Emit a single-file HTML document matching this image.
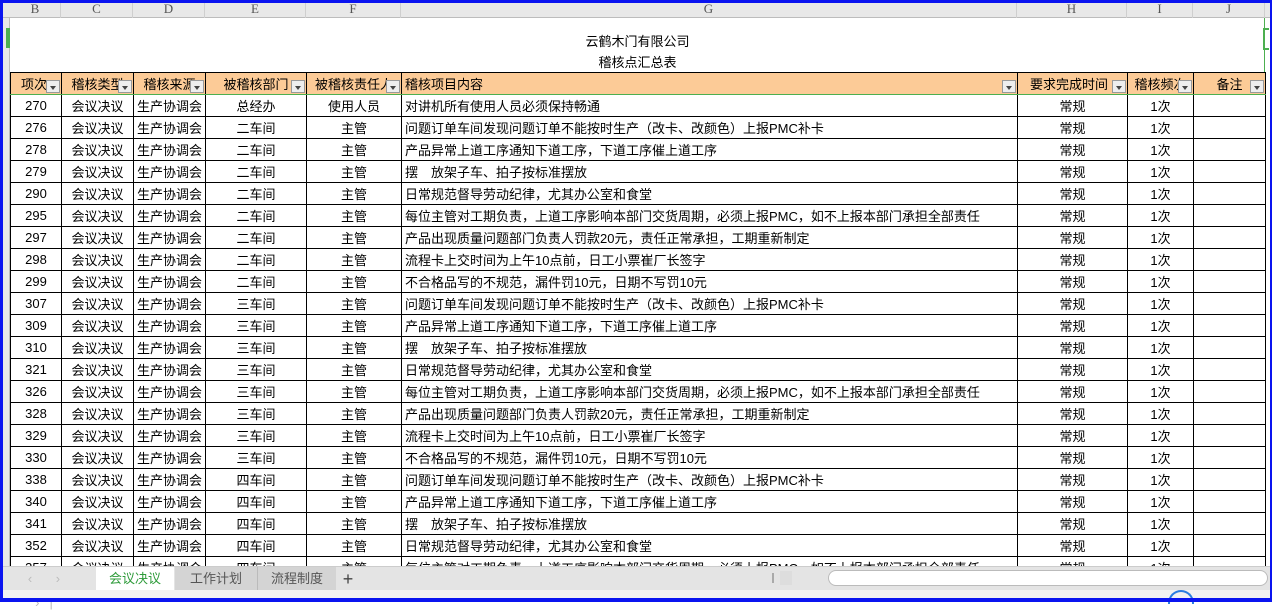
<!DOCTYPE html>
<html><head><meta charset="utf-8"><style>
*{margin:0;padding:0;box-sizing:border-box}
body{width:1272px;height:602px;overflow:hidden;background:#fff;font-family:"Liberation Sans","Noto Sans CJK SC",sans-serif;font-size:13px;color:#000;position:relative}
.frame{position:absolute;inset:0;border:2px solid #0a14f0;border-left-width:3px;border-top-width:3px;border-bottom-width:4px;z-index:10;pointer-events:none}
.colhdr{position:absolute;top:0;left:0;width:1272px;height:18px;background:#e8e8e8;border-bottom:1px solid #bcbcbc}
.colhdr div{position:absolute;top:0;height:18px;line-height:18px;text-align:center;color:#555;font-family:"Liberation Serif",serif;font-size:13px;border-right:1px solid #cfcfcf}
.gut{position:absolute;left:0;top:18px;width:10px;height:548px;background:#e8e8e8;border-right:1px solid #bcbcbc}
.title{position:absolute;top:18px;left:10px;width:1255px;height:54px;border-right:1px solid #4caf50}
.title .t{position:absolute;left:0;width:1255px;text-align:center;font-size:13px}
table{position:absolute;left:10px;top:72px;border-collapse:collapse;table-layout:fixed}
td{border:1px solid #000;height:22px;text-align:center;white-space:nowrap;overflow:hidden;padding:0 1px;font-size:13px}
td.l{text-align:left;padding-left:3px;border-left:1px solid #4caf50}
tr.h td{background:#fccb97;position:relative;border-bottom:1px solid #4caf50}
tr.h td.l{text-align:left}
.dd{position:absolute;right:1px;bottom:1px;width:14px;height:13px;background:#eee;border:1px solid #999}
.dd:after{content:"";position:absolute;left:3px;top:5px;border:3px solid transparent;border-top:4px solid #444}
.tabs{position:absolute;top:566px;left:0;width:1272px;height:24px;background:#e4e4e4;border-top:1px solid #ccc}
.tab{position:absolute;top:0;height:24px;line-height:24px;text-align:center;font-size:13px;color:#555}
.status{position:absolute;top:590px;left:0;width:1272px;height:12px;background:#f2f2f2}
</style></head><body>
<div class="colhdr">
<div style="left:10px;width:51px">B</div><div style="left:61px;width:72px">C</div><div style="left:133px;width:72px">D</div><div style="left:205px;width:101px">E</div><div style="left:306px;width:95px">F</div><div style="left:401px;width:616px">G</div><div style="left:1017px;width:110px">H</div><div style="left:1127px;width:66px">I</div><div style="left:1193px;width:72px">J</div>
</div>
<div class="gut"></div>
<div style="position:absolute;left:6px;top:28px;width:4px;height:20px;background:#4caf50"></div>
<div style="position:absolute;left:1263px;top:28px;width:6px;height:22px;border:2px solid #4caf50;border-right:none"></div>
<div class="title"><div class="t" style="top:13px">云鹤木门有限公司</div><div class="t" style="top:34px">稽核点汇总表</div></div>
<table>
<colgroup><col style="width:51px"><col style="width:72px"><col style="width:72px"><col style="width:101px"><col style="width:95px"><col style="width:616px"><col style="width:110px"><col style="width:66px"><col style="width:72px"></colgroup>
<tr class="h"><td style="text-align:left;padding-left:10px">项次<span class="dd"></span></td><td>稽核类型<span class="dd"></span></td><td>稽核来源<span class="dd"></span></td><td>被稽核部门<span class="dd"></span></td><td>被稽核责任人<span class="dd"></span></td><td class="l">稽核项目内容<span class="dd"></span></td><td style="text-align:left;padding-left:12px">要求完成时间<span class="dd"></span></td><td>稽核频次<span class="dd"></span></td><td>备注<span class="dd"></span></td></tr>
<tr><td>270</td><td>会议决议</td><td>生产协调会</td><td>总经办</td><td>使用人员</td><td class="l">对讲机所有使用人员必须保持畅通</td><td>常规</td><td>1次</td><td></td></tr>
<tr><td>276</td><td>会议决议</td><td>生产协调会</td><td>二车间</td><td>主管</td><td class="l">问题订单车间发现问题订单不能按时生产（改卡、改颜色）上报PMC补卡</td><td>常规</td><td>1次</td><td></td></tr>
<tr><td>278</td><td>会议决议</td><td>生产协调会</td><td>二车间</td><td>主管</td><td class="l">产品异常上道工序通知下道工序，下道工序催上道工序</td><td>常规</td><td>1次</td><td></td></tr>
<tr><td>279</td><td>会议决议</td><td>生产协调会</td><td>二车间</td><td>主管</td><td class="l">摆　放架子车、拍子按标准摆放</td><td>常规</td><td>1次</td><td></td></tr>
<tr><td>290</td><td>会议决议</td><td>生产协调会</td><td>二车间</td><td>主管</td><td class="l">日常规范督导劳动纪律，尤其办公室和食堂</td><td>常规</td><td>1次</td><td></td></tr>
<tr><td>295</td><td>会议决议</td><td>生产协调会</td><td>二车间</td><td>主管</td><td class="l">每位主管对工期负责，上道工序影响本部门交货周期，必须上报PMC，如不上报本部门承担全部责任</td><td>常规</td><td>1次</td><td></td></tr>
<tr><td>297</td><td>会议决议</td><td>生产协调会</td><td>二车间</td><td>主管</td><td class="l">产品出现质量问题部门负责人罚款20元，责任正常承担，工期重新制定</td><td>常规</td><td>1次</td><td></td></tr>
<tr><td>298</td><td>会议决议</td><td>生产协调会</td><td>二车间</td><td>主管</td><td class="l">流程卡上交时间为上午10点前，日工小票崔厂长签字</td><td>常规</td><td>1次</td><td></td></tr>
<tr><td>299</td><td>会议决议</td><td>生产协调会</td><td>二车间</td><td>主管</td><td class="l">不合格品写的不规范，漏件罚10元，日期不写罚10元</td><td>常规</td><td>1次</td><td></td></tr>
<tr><td>307</td><td>会议决议</td><td>生产协调会</td><td>三车间</td><td>主管</td><td class="l">问题订单车间发现问题订单不能按时生产（改卡、改颜色）上报PMC补卡</td><td>常规</td><td>1次</td><td></td></tr>
<tr><td>309</td><td>会议决议</td><td>生产协调会</td><td>三车间</td><td>主管</td><td class="l">产品异常上道工序通知下道工序，下道工序催上道工序</td><td>常规</td><td>1次</td><td></td></tr>
<tr><td>310</td><td>会议决议</td><td>生产协调会</td><td>三车间</td><td>主管</td><td class="l">摆　放架子车、拍子按标准摆放</td><td>常规</td><td>1次</td><td></td></tr>
<tr><td>321</td><td>会议决议</td><td>生产协调会</td><td>三车间</td><td>主管</td><td class="l">日常规范督导劳动纪律，尤其办公室和食堂</td><td>常规</td><td>1次</td><td></td></tr>
<tr><td>326</td><td>会议决议</td><td>生产协调会</td><td>三车间</td><td>主管</td><td class="l">每位主管对工期负责，上道工序影响本部门交货周期，必须上报PMC，如不上报本部门承担全部责任</td><td>常规</td><td>1次</td><td></td></tr>
<tr><td>328</td><td>会议决议</td><td>生产协调会</td><td>三车间</td><td>主管</td><td class="l">产品出现质量问题部门负责人罚款20元，责任正常承担，工期重新制定</td><td>常规</td><td>1次</td><td></td></tr>
<tr><td>329</td><td>会议决议</td><td>生产协调会</td><td>三车间</td><td>主管</td><td class="l">流程卡上交时间为上午10点前，日工小票崔厂长签字</td><td>常规</td><td>1次</td><td></td></tr>
<tr><td>330</td><td>会议决议</td><td>生产协调会</td><td>三车间</td><td>主管</td><td class="l">不合格品写的不规范，漏件罚10元，日期不写罚10元</td><td>常规</td><td>1次</td><td></td></tr>
<tr><td>338</td><td>会议决议</td><td>生产协调会</td><td>四车间</td><td>主管</td><td class="l">问题订单车间发现问题订单不能按时生产（改卡、改颜色）上报PMC补卡</td><td>常规</td><td>1次</td><td></td></tr>
<tr><td>340</td><td>会议决议</td><td>生产协调会</td><td>四车间</td><td>主管</td><td class="l">产品异常上道工序通知下道工序，下道工序催上道工序</td><td>常规</td><td>1次</td><td></td></tr>
<tr><td>341</td><td>会议决议</td><td>生产协调会</td><td>四车间</td><td>主管</td><td class="l">摆　放架子车、拍子按标准摆放</td><td>常规</td><td>1次</td><td></td></tr>
<tr><td>352</td><td>会议决议</td><td>生产协调会</td><td>四车间</td><td>主管</td><td class="l">日常规范督导劳动纪律，尤其办公室和食堂</td><td>常规</td><td>1次</td><td></td></tr>
<tr><td>357</td><td>会议决议</td><td>生产协调会</td><td>四车间</td><td>主管</td><td class="l">每位主管对工期负责，上道工序影响本部门交货周期，必须上报PMC，如不上报本部门承担全部责任</td><td>常规</td><td>1次</td><td></td></tr>
</table>
<div class="tabs">
<div class="tab" style="left:14px;width:70px;color:#bbb;letter-spacing:10px">‹ › ›|</div>
<div class="tab" style="left:96px;width:78px;background:#fff;color:#2e9b3a">会议决议</div>
<div class="tab" style="left:175px;width:83px;background:#d4d4d4;border-right:1px solid #bbb">工作计划</div>
<div class="tab" style="left:258px;width:78px;background:#d4d4d4">流程制度</div>
<div class="tab" style="left:338px;width:20px;font-size:18px;color:#444">+</div>
<div style="position:absolute;left:772px;top:6px;width:2px;height:10px;border-left:1px solid #aaa;border-right:1px solid #aaa"></div>
<div style="position:absolute;left:780px;top:4px;width:12px;height:14px;background:#ddd"></div>
<div style="position:absolute;left:828px;top:3px;width:440px;height:16px;background:#fff;border:1px solid #bbb;border-radius:8px"></div>
</div>
<div class="status"><div style="position:absolute;left:1168px;top:0;width:26px;height:14px;border:2px solid #2a7de1;border-bottom:none;border-radius:13px 13px 0 0"></div></div>
<div class="frame"></div>
</body></html>
